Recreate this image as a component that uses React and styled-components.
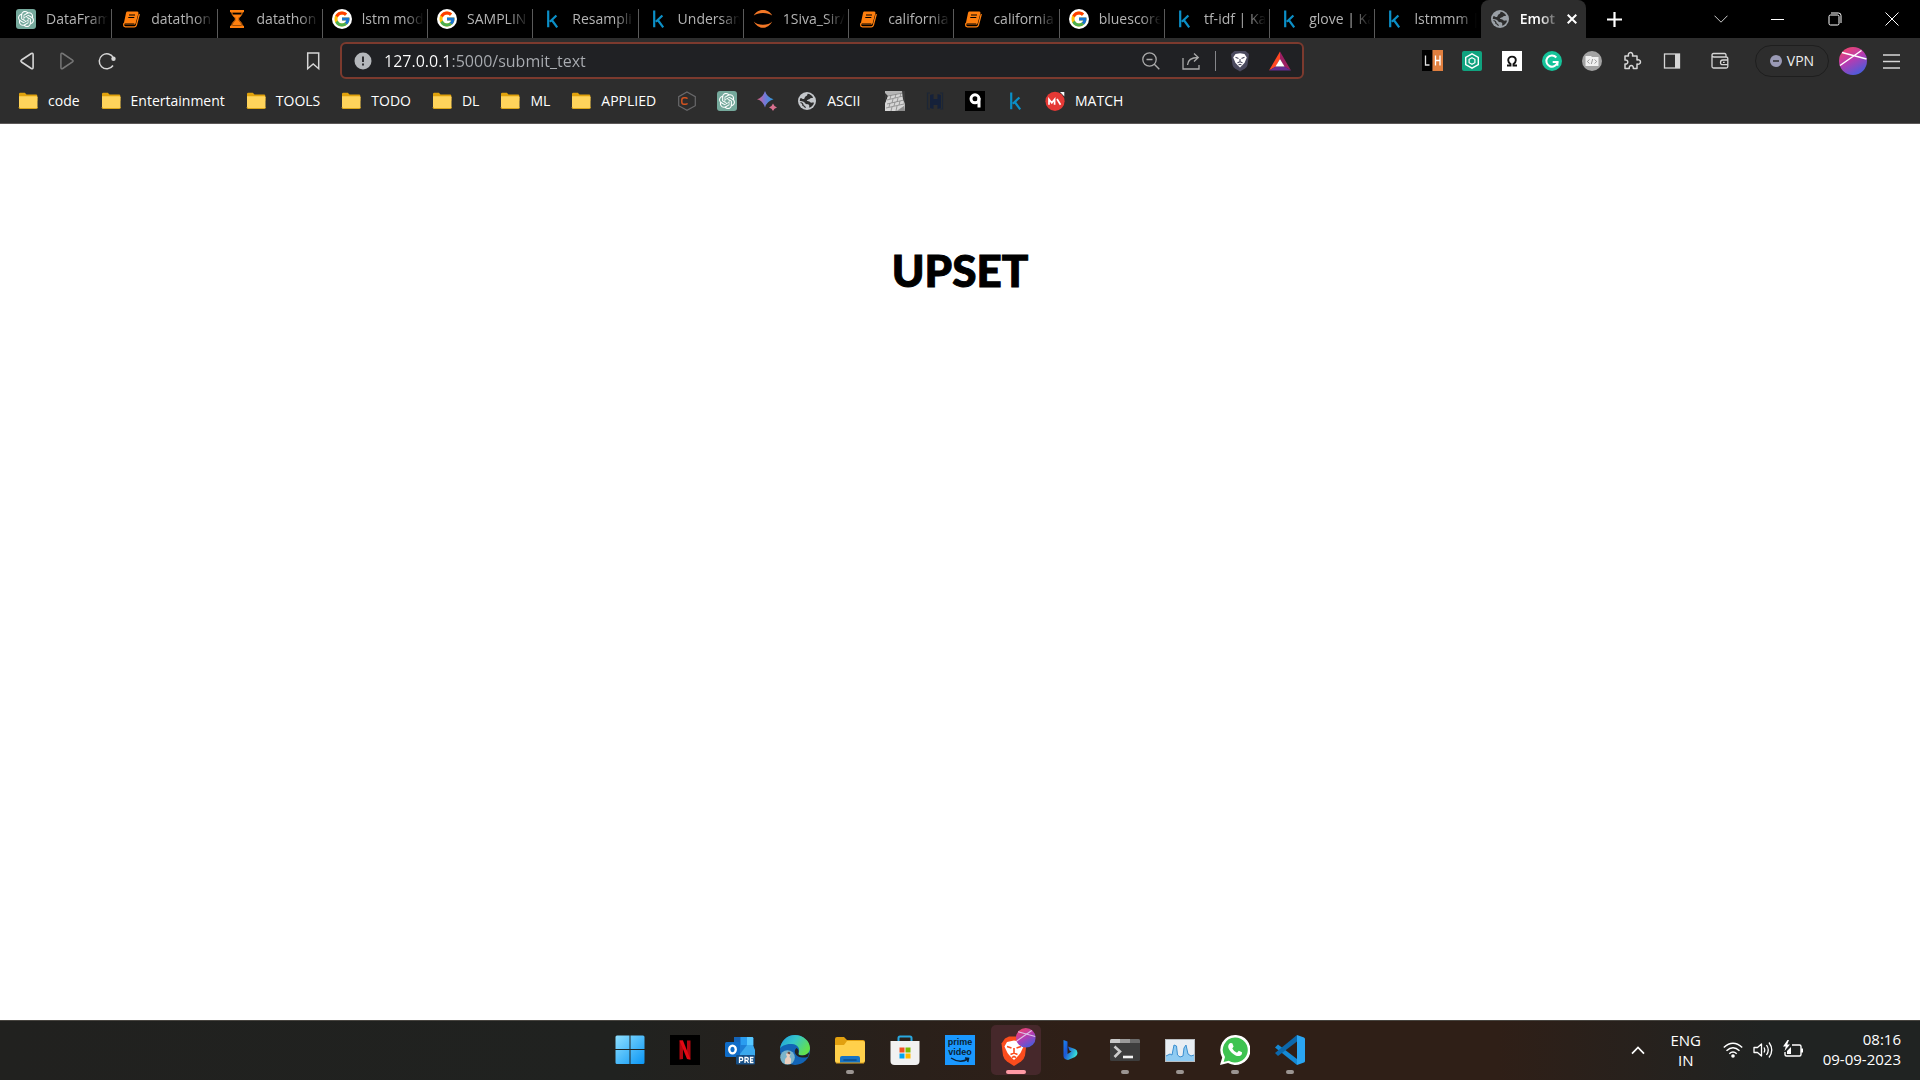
import React from 'react';
import styled, { createGlobalStyle, css } from 'styled-components';
import { SiOpenai } from 'react-icons/si';
import { FcGoogle } from 'react-icons/fc';

const GlobalStyle = createGlobalStyle`
  * { box-sizing: border-box; }
  body {
    margin: 0;
    background: #fff;
    font-family: "Open Sans", "Noto Sans", sans-serif;
    font-size: 14px;
  }
  button, input { font: inherit; color: inherit; border: 0; padding: 0; background: none; margin: 0; }
  svg { display: block; flex: none; }
  a { color: inherit; text-decoration: none; }
`;

/* ---------- layout ---------- */

const Screen = styled.div`
  min-height: 100vh;
  display: flex;
  flex-direction: column;
`;

const TabBar = styled.header`
  display: flex;
  height: 38px;
  padding-left: 7px;
  background: #000;
  color: #b4b4b4;
`;

const Tabs = styled.div`
  display: flex;
  flex: 1;
  min-width: 0;
`;

const Tab = styled.button`
  position: relative;
  display: flex;
  align-items: center;
  gap: 10px;
  flex: 1 1 0;
  min-width: 0;
  padding: 0 4px 0 9px;
  text-align: left;
  ${(p) => p.$divided && css`
    &::after {
      content: "";
      position: absolute;
      right: 0;
      top: 9px;
      bottom: 0;
      width: 1px;
      background: #5a5a5a;
    }
  `}
  ${(p) => p.$active && css`
    background: #2d2d2d;
    border-radius: 8px 8px 0 0;
    color: #fff;
    font-weight: 600;
  `}
`;

const TabTitle = styled.span`
  flex: 1;
  min-width: 0;
  overflow: hidden;
  white-space: nowrap;
  line-height: 20px;
  mask-image: linear-gradient(90deg, #000 calc(100% - 20px), transparent);
`;

const CloseMark = styled.span`
  display: grid;
  place-items: center;
  width: 20px;
  height: 20px;
  margin-left: -8px;
`;

const WindowControls = styled.div`
  display: flex;
  align-items: stretch;
  justify-content: space-between;
  width: 334px;
  color: #fff;
`;

const ControlGroup = styled.div`
  display: flex;
`;

const ControlButton = styled.button`
  display: grid;
  place-items: center;
  width: 57px;
`;

const Toolbar = styled.div`
  display: flex;
  align-items: center;
  height: 45px;
  background: #2d2d2d;
  color: #d6d6d6;
`;

const NavGroup = styled.div`
  display: flex;
  width: 340px;
  padding: 0 7px;
`;

const IconButton = styled.button`
  display: grid;
  place-items: center;
  width: 40px;
  height: 36px;
  ${(p) => p.$push && css`margin-left: auto;`}
  ${(p) => p.$apart && css`margin-left: 8px;`}
  ${(p) => p.$faded && css`color: #777;`}
`;

const Omnibox = styled.div`
  display: flex;
  align-items: center;
  flex: 1;
  min-width: 0;
  height: 37px;
  padding: 0 2px 0 12px;
  background: #202124;
  border: 2px solid #7c3a2e;
  border-radius: 6px;
`;

const Address = styled.input`
  flex: 1;
  min-width: 0;
  height: 28px;
  margin-left: 12px;
  font-size: 16px;
  color: transparent;
  background: linear-gradient(90deg, #fff 68px, #aaadb2 68px);
  background-clip: text;
  outline: 0;
`;

const Divider = styled.span`
  width: 1px;
  height: 20px;
  margin: 0 4px;
  background: #85868a;
`;

const ToolGroup = styled.div`
  display: flex;
  align-items: center;
  justify-content: flex-end;
  width: 616px;
  padding-right: 8px;
`;

const VpnButton = styled.button`
  display: flex;
  align-items: center;
  justify-content: center;
  gap: 5px;
  width: 74px;
  height: 32px;
  margin: 0 10px 0 15px;
  border: 1px solid #1e1e1e;
  border-radius: 16px;
  color: #eee;
`;

const Profile = styled.button`
  margin-right: 5px;
`;

const BookmarkBar = styled.nav`
  display: flex;
  align-items: center;
  gap: 20px;
  height: 41px;
  padding: 0 18px 4px;
  background: #2d2d2d;
  border-bottom: 1px solid #5c5858;
  color: #fff;
`;

const Bookmark = styled.a`
  display: flex;
  align-items: center;
  gap: 10px;
  line-height: 20px;
  white-space: nowrap;
`;

const BookmarkLabel = styled.span`
  padding-right: 1px;
`;

const Page = styled.main`
  flex: 1;
  padding-top: 116px;
  text-align: center;
`;

const Emotion = styled.h1`
  margin: 0;
  font-family: Lato, "Open Sans", sans-serif;
  font-size: 44px;
  line-height: 60px;
  font-weight: 900;
  color: #000;
  -webkit-text-stroke: 1px #000;
  stroke-linejoin: round;
`;

const Taskbar = styled.footer`
  display: grid;
  grid-template-columns: 1fr auto 1fr;
  align-items: center;
  height: 60px;
  box-shadow: inset 0 1px #47443f;
  background: linear-gradient(90deg, #21211f 0, #202220 32%, #2f1f17 56%, #2f1f17 78%, #202322 92%, #202322);
  color: #fff;
`;

const Apps = styled.div`
  grid-column: 2;
  display: flex;
`;

const AppButton = styled.button`
  position: relative;
  display: grid;
  place-items: center;
  width: 55px;
  height: 60px;
  ${(p) => p.$running && css`
    &::after {
      content: "";
      position: absolute;
      bottom: 6px;
      left: calc(50% - 4px);
      width: 8px;
      height: 4px;
      border-radius: 2px;
      background: #9b9592;
    }
  `}
  ${(p) => p.$focused && css`
    height: 50px;
    width: 50px;
    margin: 5px 2px 5px 3px;
    background: #46282b;
    border-radius: 5px;
    &::after {
      content: "";
      position: absolute;
      bottom: 1px;
      left: 15px;
      width: 20px;
      height: 4px;
      border-radius: 2px;
      background: #ff9aa5;
    }
  `}
`;

const Tray = styled.div`
  grid-column: 3;
  justify-self: end;
  display: flex;
  align-items: center;
  padding-right: 19px;
  font-size: 15px;
  line-height: 20px;
`;

const TrayButton = styled.button`
  display: grid;
  place-items: center;
  align-content: center;
  width: 48px;
  min-height: 48px;
`;

const QuickSettings = styled.button`
  display: flex;
  align-items: center;
  gap: 10px;
  margin: 0 20px 0 13px;
`;

const Clock = styled.button`
  text-align: right;
  line-height: 20px;
  padding-bottom: 2px;
`;

const Language = styled(TrayButton)`
  line-height: 20px;
`;

const Line = styled.span`
  display: block;
`;

/* ---------- icons ---------- */

const Svg = ({ size = 20, w, h, box, children }) => (
  <svg width={w || size} height={h || size} viewBox={box || `0 0 ${w || size} ${h || size}`} fill="none" aria-hidden="true">
    {children}
  </svg>
);

const ChatIcon = () => (
  <Svg>
    <rect width="20" height="20" rx="3" fill="#75a99c" />
    <SiOpenai x="2" y="2" width="16" height="16" size={16} color="#fff" />
  </Svg>
);

const BookIcon = () => (
  <Svg>
    <path d="M6 2.5h10.3q1.5.2 1.1 1.7l-2.7 10q-.4 1.5-2 1.5H4.500q-2-.4-1.500-2.200L5 4q.3-1.200 1-1.500z" fill="#ff7f0e" />
    <path d="M3 14l-.4 2q0 1.800 1.800 1.800h8.800q1.700 0 2.200-1.700L18.300 5" stroke="#ff7f0e" strokeWidth="1.300" />
    <path d="M8 6h6M7.300 8.500h6M3.800 15h9.500" stroke="#000" strokeWidth="1.100" />
  </Svg>
);

const HourglassIcon = () => (
  <Svg>
    <path d="M3 1h14v2.200H3zM3 16.700h14V19H3z" fill="#ff7f0e" />
    <path d="M4.700 3c0 4 3.800 5 3.800 7s-3.800 3-3.800 7h10.600c0-4-3.800-5-3.800-7s3.800-3 3.800-7z" stroke="#ff7f0e" />
    <path d="M5.500 5.500h9C13.800 8 11 8.600 11 10s2.200 2 3.600 6H5.400C6.800 12 9 11.400 9 10S6.200 8 5.500 5.500z" fill="#ff7f0e" />
  </Svg>
);

const GoogleIcon = () => (
  <Svg>
    <circle cx="10" cy="10" r="10" fill="#fff" />
    <FcGoogle x="1" y="1" width="18" height="18" size={18} />
  </Svg>
);

const KaggleIcon = () => (
  <Svg>
    <path d="M6.200 1.500v16.800M14.400 6.500l-6.500 6.300M9.800 11l5.400 7.300" stroke="#0b8fc7" strokeWidth="2.200" />
  </Svg>
);

const JupyterIcon = () => (
  <Svg>
    <path d="M.8 6.500C3 2.500 6.500 1 10 1s7 1.500 9.200 5.500C17 4.700 14 3.900 10 3.900S3 4.700.8 6.500zM.8 12.500c2.200 4 5.700 6.300 9.200 6.300s7-2.300 9.200-6.300c-2.200 2.300-5.200 3.300-9.200 3.300s-7-1-9.200-3.300z" fill="#f37726" />
  </Svg>
);

const GlobeIcon = ({ color = '#9aa0a6' }) => (
  <Svg>
    <circle cx="10" cy="10" r="9" fill={color} />
    <path d="M10.500 2.800c2.500.2 4.500 1.600 5.600 3.600-1 .9-2.600.3-3.200 1.400-.4 1-2.700.6-3 1.800-.1 1 2.600.4 3.200 1.500.4 1 2.300.2 3.900.6-.5 2.300-2.300 4.300-4.700 5.100-.3-1.200.5-2.500-.7-3.300-1.200-.8-2.300.1-3.300-1.100-.7-1.200-2.400-2.400-5.500-2.300 0-1.200.2-2.200.7-3.200 2 .6 2.600 1.700 3.700.9 1-.8.200-1.700 1.300-2.200 1.300-.5 2-1.300 2-2.800z" fill="#2d2d2d" />
    <path d="M3.500 11.500c1.700.4 2.600 1.500 2.500 3 1.200.5 2 1.200 2.500 2.300" stroke="#2d2d2d" strokeWidth="1.200" />
  </Svg>
);

const LightGlobeIcon = () => <GlobeIcon color="#c4c7cb" />;

const FolderIcon = () => (
  <Svg>
    <path d="M1 3q0-1.300 1.300-1.300h4.500L8.500 3.500H18q1.300 0 1.300 1.300v5H1z" fill="#e0a20c" />
    <path d="M1 5.200h17.500q1 0 1 1v10.300q0 1-1 1H2q-1 0-1-1z" fill="#ffd45b" />
    <path d="M1 16.200q0 1.300 1 1.300h16.500q1 0 1-1.300" stroke="#dba516" />
  </Svg>
);

const HexIcon = () => (
  <Svg>
    <path d="M10 1l8.300 4.700v9L10 19.200 1.700 14.700v-9z" stroke="#68686a" strokeWidth="1.200" />
    <path d="M10.500 7.600Q9.800 6.700 8.300 6.700H7Q4.800 6.700 4.800 9v2q0 2.300 2.200 2.300h1.300q1.500 0 2.200-.9" stroke="#d4531f" strokeWidth="1.500" />
  </Svg>
);

const SparkleIcon = () => (
  <Svg>
    <defs>
      <linearGradient id="spark" x1="0" y1="0" x2="1" y2="0">
        <stop offset="0" stopColor="#e0617a" />
        <stop offset=".45" stopColor="#7a76d6" />
        <stop offset="1" stopColor="#2a9ddd" />
      </linearGradient>
    </defs>
    <path d="M8 0q2 6.300 8.500 8.300Q10 10 8 16.500 6 10 0 8.300 6 6.300 8 0z" fill="url(#spark)" />
    <path d="M16 12.500q1 3 4 3.900-3 .9-4 3.600-1-2.700-4-3.600 3-.9 4-3.900z" fill="#d9708f" />
  </Svg>
);

const BrickIcon = () => (
  <Svg>
    <path d="M0 0h20v20H0v-7l3-8-3-3z" fill="#b5b5b5" />
    <path d="M3 5l14-3 2 13-8 5H0v-7z" fill="#d6d6d6" />
    <path d="M3 5l15-3M2 9l16-4M2 13l17-4M1 17l18-4M6 4L5 8m6-5l-1 4m6-5l-1 4M8 8l-1 4m6-5l-1 4M5 12l-1 4m6-5l-1 4m6-5l-1 4M7 16l-1 4m6-5l-1 5" stroke="#858585" strokeWidth=".8" />
    <path d="M17 0h3v13l-2-5zM0 3l2 2-2 6z" fill="#3a3a3a" />
    <path d="M19 15l1 5h-8z" fill="#8d8d8d" />
  </Svg>
);

const FilmIcon = () => (
  <Svg>
    <path d="M5 2H2.500v16H5M15 2h2.500v16H15" stroke="#1c2636" strokeWidth="1.200" />
    <path d="M5 4l3.500-1v5h4V3L16 4v13l-3.500 1v-4h-4v4L5 17z" fill="#15213a" />
  </Svg>
);

const NineIcon = () => (
  <Svg>
    <rect width="20" height="20" fill="#000" />
    <circle cx="10" cy="7.800" r="4" stroke="#fff" strokeWidth="3" />
    <path d="M14 7v9.500" stroke="#fff" strokeWidth="3" />
  </Svg>
);

const MatchIcon = () => (
  <Svg>
    <circle cx="10" cy="10.300" r="9.600" fill="#e53935" />
    <path d="M4 13.700V8.300l2.800 3.500 2.800-3.500v5.400M12 8l3.500 5.700" stroke="#fff" strokeWidth="1.700" />
    <path d="M15 1h4.300v4.500L18 4l-1-1z" fill="#fff" />
  </Svg>
);

const LhIcon = () => (
  <Svg w={21} h={21}>
    <rect width="10.500" height="21" fill="#000" />
    <rect x="10.500" width="10.500" height="21" fill="#e07f3f" />
    <path d="M3.500 5.500v9.500h4" stroke="#ddd" strokeWidth="1.300" />
    <path d="M13.500 5.500v10m4.500-10v10m-4.500-5H18" stroke="#fff" strokeWidth="1.300" />
  </Svg>
);

const HexGreenIcon = () => (
  <Svg>
    <rect width="20" height="20" rx="2" fill="#10a37f" />
    <path d="M10 2.800l6.300 3.600v7.200L10 17.200l-6.300-3.600V6.400z" stroke="#fff" strokeWidth="1.400" />
    <path d="M10 6.700l2.900 1.600v3.400L10 13.300l-2.900-1.600V8.300z" stroke="#fff" strokeWidth="1.200" />
  </Svg>
);

const OmegaIcon = () => (
  <Svg>
    <rect width="20" height="20" fill="#fff" />
    <path d="M5 14.500h3.500v-1.500C6.800 12 6.200 10.600 6.200 9.300 6.200 7 7.800 5.600 10 5.600s3.800 1.400 3.800 3.700c0 1.300-.6 2.700-2.300 3.700v1.500H15" stroke="#111" strokeWidth="1.900" />
  </Svg>
);

const GrammarIcon = () => (
  <Svg>
    <circle cx="10" cy="10" r="10" fill="#15c39a" />
    <path d="M14.300 6.500A5.600 5.600 0 1 0 15.500 11H10.700" stroke="#fff" strokeWidth="2" />
    <path d="M15.500 11v3.700" stroke="#fff" strokeWidth="1.800" />
  </Svg>
);

const CodeIcon = () => (
  <Svg>
    <circle cx="10" cy="10" r="10" fill="#a3a3a3" />
    <path d="M3.500 5H9l1 1h6.500v9h-13z" fill="#f0f0f0" />
    <path d="M7.500 8.500L5.300 10.500l2.200 2m5-4l2.200 2-2.200 2M10.700 8l-1.400 5" stroke="#909090" strokeWidth=".9" />
  </Svg>
);

const PuzzleIcon = () => (
  <Svg>
    <path d="M3 5h3.500c-.6-1.700.3-3.500 2-3.500s2.700 1.800 2 3.500H15v4c1.800-.6 3.500.3 3.500 2s-1.700 2.600-3.500 2v4.500h-3.700c.3-1.700-.6-2.900-2-2.900s-2.400 1.200-2 2.900H3V13c1.600.3 2.800-.5 2.800-2S4.600 8.700 3 9z" stroke="currentColor" strokeWidth="1.500" strokeLinejoin="round" />
  </Svg>
);

const PanelIcon = () => (
  <Svg>
    <rect x="2.500" y="3" width="15" height="14" stroke="currentColor" strokeWidth="1.300" />
    <path d="M13 3h5v14h-5z" fill="currentColor" />
  </Svg>
);

const WalletIcon = () => (
  <Svg>
    <path d="M16 6V4q0-1.500-1.500-1.500H3.500Q2 2.500 2 4v11.500Q2 17 3.500 17h12.800q1.500 0 1.500-1.500v-8Q17.800 6 16.300 6H4Q2 6 2 4.300" stroke="currentColor" strokeWidth="1.300" />
    <path d="M17.800 9h-5q-2.300 0-2.300 2.400t2.300 2.300h5M13 11.400h1.700" stroke="currentColor" strokeWidth="1.300" />
  </Svg>
);

const Avatar = () => (
  <Svg size={28}>
    <defs>
      <linearGradient id="avatar" x1=".2" y1="0" x2=".75" y2="1">
        <stop offset="0" stopColor="#f0466a" />
        <stop offset=".45" stopColor="#b83bb0" />
        <stop offset="1" stopColor="#3f5fe0" />
      </linearGradient>
    </defs>
    <circle cx="14" cy="14" r="14" fill="url(#avatar)" />
    <path d="M1 18.500L22.500 3.500M3 5.500L27.500 12" stroke="#fff" strokeWidth="1.500" />
  </Svg>
);

const ShieldIcon = () => (
  <Svg w={20} h={22}>
    <path d="M4.500 1h11L19 4l-1.500 11q-.5 2-2.500 3.500L10 21.500 5 18.500Q3 17 2.500 15L1 4z" fill="#4a4a5e" />
    <path d="M5.500 4l4.500-.7 4.500.7 2.300 3.500-2.200 5.200-2.300 2.600L10 17.500l-2.300-2.200-2.300-2.600L3.200 7.500z" fill="#fff" />
    <path d="M5.500 7.300l3 1.200m6-1.200l-3 1.200M7.500 12.800l2.500-1 2.500 1M10 11.800V9M8.500 15l1.500-.7 1.500.7" stroke="#4a4a5e" strokeWidth="1.100" />
  </Svg>
);

const BatIcon = () => (
  <Svg w={22} h={20}>
    <path d="M11 .5L0 19.500l7-4L11 8z" fill="#ff4724" />
    <path d="M11 .5L22 19.500l-7-4L11 8z" fill="#9e1f63" />
    <path d="M0 19.500h22l-6.500-4h-9z" fill="#662d91" />
    <path d="M11 8l4.500 7.500h-9z" fill="#fff" />
  </Svg>
);

const BraveApp = () => (
  <Svg size={44}>
    <path d="M11 10.500l4-2h10l4 2 3.500 5-1.500 12q-1 4-4 6l-7 4.500-7-4.500q-3-2-4-6l-1.500-12z" fill="#fb4c1d" />
    <path d="M13 14l7-1.500L27 14l2.500 4.500-3 6.500-2.500 3-4 4-4-4-2.500-3-3-6.500z" fill="#fff" />
    <path d="M13 18.500l4.500 1.500m9.500-1.500L22.500 20M16.500 26.500L20 25l3.500 1.500M20 25v-5M18 29.500l2-1 2 1" stroke="#fb4c1d" strokeWidth="1.600" />
    <g transform="translate(22 0) scale(.7)">
      <circle cx="14" cy="14" r="14" fill="url(#avatar)" />
      <path d="M1 18.500L22.500 3.500M3 5.500L27.500 12" stroke="#ddc3e8" strokeWidth="1.500" />
    </g>
  </Svg>
);

const WindowsApp = () => (
  <Svg size={30}>
    <defs>
      <linearGradient id="win" x1="0" y1="0" x2="1" y2="1">
        <stop offset="0" stopColor="#8fe0ff" />
        <stop offset="1" stopColor="#0a96f5" />
      </linearGradient>
    </defs>
    <path d="M2 .5h12.500V14H.5V2Q.5.500 2 .5zM15.500.500H28q1.500 0 1.500 1.500v12h-14zM.5 15h14v14H2Q.5 29 .5 27.500zM15.500 15h14v12.500q0 1.500-1.500 1.500H15.500z" fill="url(#win)" />
  </Svg>
);

const NetflixApp = () => (
  <Svg size={30}>
    <rect width="30" height="30" fill="#000" />
    <path d="M9.500 5.500h3.500v18.500l-3.500.5zM17 5.500h3.500v19L17 24z" fill="#b1060f" />
    <path d="M9.500 5.500H13l7.500 19L17 24z" fill="#e50914" />
  </Svg>
);

const OutlookApp = () => (
  <Svg size={30}>
    <path d="M9 2h18q1.300 0 1.300 1.300V18H9z" fill="#1a6fd0" />
    <path d="M9 2h6.500v8H9z" fill="#1464b8" />
    <path d="M15.500 2H22v8h-6.500z" fill="#2a9df0" />
    <path d="M22 2h5q1.300 0 1.300 1.300V10H22z" fill="#57c8ff" />
    <path d="M15 10h13l2 5v8H13z" fill="#3aa9ee" />
    <path d="M15 10h7l-7 9z" fill="#1d7fd6" />
    <rect y="7" width="15" height="15" rx="1.500" fill="#0f6cc8" />
    <ellipse cx="7.500" cy="14.500" rx="3.300" ry="3.800" stroke="#fff" strokeWidth="2.300" />
    <rect x="11" y="20" width="19" height="9.500" rx="1" fill="#174f86" />
    <path d="M14.500 28v-5.500h1.800q1.500 0 1.500 1.600t-1.500 1.600h-1.800M20 28v-5.500h1.800q1.500 0 1.500 1.500t-1.500 1.500H20m2 0l1.500 2.500M28.500 22.500h-3V27.500h3m-3-2.500h2.600" stroke="#fff" strokeWidth="1.300" />
  </Svg>
);

const EdgeApp = () => (
  <Svg size={30}>
    <defs>
      <linearGradient id="edgeTop" x1="0" y1="0" x2="1" y2=".5">
        <stop offset="0" stopColor="#1c9cdc" />
        <stop offset=".5" stopColor="#36c6c9" />
        <stop offset="1" stopColor="#62e04e" />
      </linearGradient>
    </defs>
    <circle cx="15" cy="15" r="15" fill="#1264b6" />
    <path d="M0 14C1 6 7 0 15 0s15 6 15 13c0 5-4 7.500-8 7.500-3 0-4-1-3.500-2.500C20.500 14 18 9.500 12 9 6 8.500 1 11 0 14z" fill="url(#edgeTop)" />
    <path d="M18.500 18c-.5 1.500.5 2.500 3.500 2.500 3 0 5-1 6.700-3 .6 1.500-.2 3-1.200 4.500-5 1.500-11 0-12.500-4-.6-2 0-4 1.500-5 2 1.300 2.500 3.200 2 5z" fill="#23211f" />
    <circle cx="7.500" cy="22.500" r="7.300" fill="#79b4cb" />
    <path d="M5 29c-.5-4 0-6 2-7l-1-3 2.500-2 2 2-1 3c2 1 2 4 1 7z" fill="#ead0c0" />
    <path d="M7 18l2-1.500 1.500 1.500-1 1.500z" fill="#704c40" />
  </Svg>
);

const ExplorerApp = () => (
  <Svg size={30}>
    <path d="M0 4q0-2 2-2h7l3 3h16q2 0 2 2v6H0z" fill="#e2a00f" />
    <path d="M0 10h9l3-4h16q2 0 2 2v18q0 2-2 2H2q-2 0-2-2z" fill="#ffd04b" />
    <path d="M5 28v-5q0-2 2-2h16q2 0 2 2v5z" fill="#1673c4" />
    <path d="M9 25h12" stroke="#0a4d8c" strokeWidth="1.600" strokeLinecap="round" />
    <path d="M1 28h28" stroke="#e3a51f" />
  </Svg>
);

const StoreApp = () => (
  <Svg size={30}>
    <path d="M8.500 7V3q0-1.500 1.500-1.500h10q1.500 0 1.500 1.500v4" stroke="#29a8e0" strokeWidth="2" />
    <path d="M.5 6h29v20q0 4-4 4h-21q-4 0-4-4z" fill="#f1f1f1" />
    <path d="M9.500 12.500h5v5h-5z" fill="#f25022" />
    <path d="M15.500 12.500h5v5h-5z" fill="#7fba00" />
    <path d="M9.500 18.500h5v5h-5z" fill="#00a4ef" />
    <path d="M15.500 18.500h5v5h-5z" fill="#ffb900" />
  </Svg>
);

const PrimeTile = styled.span`
  display: flex;
  flex-direction: column;
  align-items: center;
  width: 30px;
  height: 30px;
  padding-top: 2px;
  background: #1a98ff;
  color: #0b1f33;
  font: 700 9px/10px "Liberation Sans", sans-serif;
`;

const PrimeApp = () => (
  <PrimeTile>
    <span>prime</span>
    <span>video</span>
    <Svg w={22} h={7}>
      <path d="M2 1q9 6 17 1M16 1l3.500.500-.8 3.500" stroke="#0b1f33" strokeWidth="1.500" />
    </Svg>
  </PrimeTile>
);

const BingApp = () => (
  <Svg size={30}>
    <defs>
      <linearGradient id="bing" x1="0" y1="0" x2="1" y2=".6">
        <stop offset="0" stopColor="#1a86f0" />
        <stop offset=".4" stopColor="#1c56d8" />
        <stop offset="1" stopColor="#38e0d8" />
      </linearGradient>
    </defs>
    <path d="M8.500 5l4 1.500v12.500l4-2.500-2-1-1.500-4 7 2.500q2.500 1.200 2.500 4t-2.500 4L13 25q-4.500-.5-4.500-4z" fill="url(#bing)" />
  </Svg>
);

const TerminalApp = () => (
  <Svg w={30} h={22}>
    <rect width="30" height="22" rx="1.500" fill="#3d3d3d" />
    <path d="M0 4V1.500Q0 0 1.500 0H20v4z" fill="#c9c9c9" />
    <path d="M10 0h10v4H10z" fill="#9b9b9b" />
    <path d="M20 0h8.500Q30 0 30 1.500V4H20z" fill="#6a6a6a" />
    <path d="M4.500 7.500l5.500 5-5.500 5.500" stroke="#ccc" strokeWidth="2.600" />
    <path d="M13 18h10" stroke="#f2f2f2" strokeWidth="2.600" />
  </Svg>
);

const MonitorApp = () => (
  <Svg w={30} h={23}>
    <rect x=".5" y=".5" width="29" height="22" fill="#e9eef3" stroke="#b9bec2" />
    <path d="M1 17l4-2 2 1 2-10 2.500 1 1 9 2.500 2 3-1 1-8 2-3 2 9 3 2 3-1v6H1z" fill="#8fcbf2" />
    <path d="M1 17l4-2 2 1 2-10 2.500 1 1 9 2.500 2 3-1 1-8 2-3 2 9 3 2 3-1" stroke="#3b8fd0" />
  </Svg>
);

const WhatsappApp = () => (
  <Svg size={30}>
    <path d="M15 0a15 15 0 1 1-7 28L0 30l2.200-7.600A15 15 0 0 1 15 0z" fill="#fff" />
    <path d="M15 2.500a12.500 12.500 0 1 1-6.200 23.200L3.600 27l1.400-5A12.500 12.500 0 0 1 15 2.500z" fill="#3fc351" />
    <path d="M10.700 8l1.600.2 1.300 3.300-1.300 1.900q1.500 3 4.700 4.300l1.800-2 3.200 1.600q.3 3-2.600 3.700c-2 .5-5.400-1-7.700-3.300S8 13 8.200 11.300 9.600 8.200 10.700 8z" fill="#fff" />
  </Svg>
);

const VsCodeApp = () => (
  <Svg size={30}>
    <path d="M3 9.500L22 24v6L0 12.500z" fill="#1589d4" />
    <path d="M0 18l3 3L22 6.500V0z" fill="#0c68ac" />
    <path d="M22 0l7 2.500q1 .5 1 1.500v22q0 1-1 1.500L22 30z" fill="#2aa5f2" />
  </Svg>
);

/* ---------- data ---------- */

const tabs = [
  [ChatIcon, 'DataFram'],
  [BookIcon, 'datathon'],
  [HourglassIcon, 'datathon'],
  [GoogleIcon, 'lstm mod'],
  [GoogleIcon, 'SAMPLIN'],
  [KaggleIcon, 'Resampli'],
  [KaggleIcon, 'Undersam'],
  [JupyterIcon, '1Siva_Sir/'],
  [BookIcon, 'california'],
  [BookIcon, 'california'],
  [GoogleIcon, 'bluescore'],
  [KaggleIcon, 'tf-idf | Ka'],
  [KaggleIcon, 'glove | Ka'],
  [KaggleIcon, 'lstmmm |'],
];

const bookmarks = [
  [FolderIcon, 'code'],
  [FolderIcon, 'Entertainment'],
  [FolderIcon, 'TOOLS'],
  [FolderIcon, 'TODO'],
  [FolderIcon, 'DL'],
  [FolderIcon, 'ML'],
  [FolderIcon, 'APPLIED'],
  [HexIcon],
  [ChatIcon],
  [SparkleIcon],
  [LightGlobeIcon, 'ASCII\u00a0'],
  [BrickIcon],
  [FilmIcon],
  [NineIcon],
  [KaggleIcon],
  [MatchIcon, 'MATCH'],
];

const extensions = [LhIcon, HexGreenIcon, OmegaIcon, GrammarIcon, CodeIcon, PuzzleIcon, PanelIcon];

const apps = [
  { icon: WindowsApp },
  { icon: NetflixApp },
  { icon: OutlookApp },
  { icon: EdgeApp },
  { icon: ExplorerApp, running: true },
  { icon: StoreApp },
  { icon: PrimeApp },
  { icon: BraveApp, focused: true },
  { icon: BingApp },
  { icon: TerminalApp, running: true },
  { icon: MonitorApp, running: true },
  { icon: WhatsappApp, running: true },
  { icon: VsCodeApp, running: true },
];

/* ---------- sections ---------- */

const TabStrip = () => (
  <TabBar>
    <Tabs>
      {tabs.map(([Icon, title], i) => (
        <Tab key={i} $divided={i < tabs.length - 1}>
          <Icon />
          <TabTitle>{title}</TabTitle>
        </Tab>
      ))}
      <Tab $active>
        <GlobeIcon />
        <TabTitle>Emot</TabTitle>
        <CloseMark>
          <Svg size={10}>
            <path d="M.7.7l8.600 8.600M9.300.7L.7 9.300" stroke="#fff" strokeWidth="2" />
          </Svg>
        </CloseMark>
      </Tab>
    </Tabs>
    <WindowControls>
      <ControlButton aria-label="New tab">
        <Svg size={15}>
          <path d="M7.500 0v15M0 7.500h15" stroke="#fff" strokeWidth="2.200" />
        </Svg>
      </ControlButton>
      <ControlGroup>
        <ControlButton aria-label="Search tabs">
          <Svg w={14} h={8}>
            <path d="M.5.700L7 7.200 13.500.700" stroke="#ccc" />
          </Svg>
        </ControlButton>
        <ControlButton aria-label="Minimize">
          <Svg w={13} h={1}>
            <path d="M0 .5h13" stroke="#fff" />
          </Svg>
        </ControlButton>
        <ControlButton aria-label="Restore">
          <Svg size={14}>
            <rect x="1" y="3" width="10" height="10" rx="1.500" stroke="#fff" />
            <path d="M3 1h7.500Q13 1 13 3.500V11" stroke="#fff" />
          </Svg>
        </ControlButton>
        <ControlButton aria-label="Close">
          <Svg size={14}>
            <path d="M.5.500l13 13M13.500.500l-13 13" stroke="#fff" />
          </Svg>
        </ControlButton>
      </ControlGroup>
    </WindowControls>
  </TabBar>
);

const NavBar = () => (
  <Toolbar>
    <NavGroup>
      <IconButton aria-label="Back">
        <Svg>
          <path d="M14.300 2.500q1.800-1 1.800 1.200v12.600q0 2.200-1.800 1.200L4.500 11q-1.200-1 0-2z" stroke="currentColor" strokeWidth="1.600" />
        </Svg>
      </IconButton>
      <IconButton aria-label="Forward" $faded>
        <Svg>
          <path d="M5.700 2.500q-1.800-1-1.800 1.200v12.600q0 2.200 1.800 1.200L15.500 11q1.200-1 0-2z" stroke="currentColor" strokeWidth="1.500" />
        </Svg>
      </IconButton>
      <IconButton aria-label="Reload">
        <Svg>
          <path d="M16.500 7A7.500 7.500 0 1 0 16 14.500" stroke="currentColor" strokeWidth="1.500" />
          <circle cx="16.500" cy="7.800" r="2.200" fill="currentColor" />
        </Svg>
      </IconButton>
      <IconButton aria-label="Bookmark this page" $push>
        <Svg>
          <path d="M4.700 2h11v15.700L10.200 13l-5.500 4.700z" stroke="currentColor" strokeWidth="1.500" />
        </Svg>
      </IconButton>
    </NavGroup>
    <Omnibox>
      <Svg size={18}>
        <circle cx="9" cy="9" r="8.500" fill="#b4b7bb" />
        <path d="M9 4.500v5.500M9 11.500v2" stroke="#202124" strokeWidth="1.800" />
      </Svg>
      <Address aria-label="Address" defaultValue="127.0.0.1:5000/submit_text" />
      <IconButton aria-label="Zoom">
        <Svg>
          <circle cx="8.500" cy="8.500" r="6.700" stroke="#aaa" strokeWidth="1.300" />
          <path d="M13.300 13.300l5 5M5.500 8.500h6" stroke="#aaa" strokeWidth="1.400" />
        </Svg>
      </IconButton>
      <IconButton aria-label="Share">
        <Svg>
          <path d="M2 7v11h16v-4" stroke="#aaa" strokeWidth="1.300" />
          <path d="M6.500 14q.5-7.500 10.500-7.500M13 2.500l4.300 4-4.300 4" stroke="#aaa" strokeWidth="1.300" />
        </Svg>
      </IconButton>
      <Divider />
      <IconButton aria-label="Shields"><ShieldIcon /></IconButton>
      <IconButton aria-label="Rewards"><BatIcon /></IconButton>
    </Omnibox>
    <ToolGroup>
      {extensions.map((Icon, i) => (
        <IconButton key={i}><Icon /></IconButton>
      ))}
      <IconButton aria-label="Wallet" $apart><WalletIcon /></IconButton>
      <VpnButton>
        <Svg size={12}>
          <circle cx="6" cy="6" r="6" fill="#9a9ab5" />
          <path d="M3 6h6" stroke="#2d2d2d" strokeWidth="1.500" />
        </Svg>
        VPN
      </VpnButton>
      <Profile aria-label="Profile"><Avatar /></Profile>
      <IconButton aria-label="Menu">
        <Svg>
          <path d="M1 4h17M1 10.500h17M1 17h17" stroke="currentColor" strokeWidth="1.500" />
        </Svg>
      </IconButton>
    </ToolGroup>
  </Toolbar>
);

const SystemTray = () => (
  <Tray>
    <TrayButton aria-label="Show hidden icons">
      <Svg w={14} h={9}>
        <path d="M1 7.700L7 1.500l6 6.200" stroke="#fff" strokeWidth="1.700" />
      </Svg>
    </TrayButton>
    <Language>
      <Line>ENG</Line>
      <Line>IN</Line>
    </Language>
    <QuickSettings aria-label="Network, volume and battery">
      <Svg>
        <path d="M.8 7.500q9.200-8.500 18.400 0M3.500 10.700q6.500-6 13 0M6.300 13.700q3.700-3.400 7.400 0" stroke="#fff" strokeWidth="1.500" />
        <circle cx="10" cy="16" r="1.800" fill="#fff" />
      </Svg>
      <Svg>
        <path d="M1 7.500h3.500L8.500 4v12l-4-3.500H1z" stroke="#fff" strokeWidth="1.300" strokeLinejoin="round" />
        <path d="M11 7.500q1.500 2.500 0 5M13.500 5q3.500 5 0 10M16 2.500q5.500 7.500 0 15" stroke="#fff" strokeWidth="1.300" />
      </Svg>
      <Svg>
        <path d="M9 5h7.500q1.500 0 1.500 1.500v8q0 1.500-1.500 1.500h-13Q2 16 2 14.500V12" stroke="#fff" strokeWidth="1.400" />
        <path d="M18 8.500h2v4h-2zM4.500 0L0 6.500h2.800L1.500 11 7 4.500H4.200L6 0zM4 14v-3l4-4v7z" fill="#fff" />
      </Svg>
    </QuickSettings>
    <Clock>
      <Line>08:16</Line>
      <Line>09-09-2023</Line>
    </Clock>
  </Tray>
);

export default function App() {
  return (
    <Screen>
      <GlobalStyle />
      <TabStrip />
      <NavBar />
      <BookmarkBar>
        {bookmarks.map(([Icon, label], i) => (
          <Bookmark key={i} href="#">
            <Icon />
            {label && <BookmarkLabel>{label}</BookmarkLabel>}
          </Bookmark>
        ))}
      </BookmarkBar>
      <Page>
        <Emotion>UPSET</Emotion>
      </Page>
      <Taskbar>
        <Apps>
          {apps.map(({ icon: Icon, running, focused }, i) => (
            <AppButton key={i} $running={running} $focused={focused}>
              <Icon />
            </AppButton>
          ))}
        </Apps>
        <SystemTray />
      </Taskbar>
    </Screen>
  );
}
